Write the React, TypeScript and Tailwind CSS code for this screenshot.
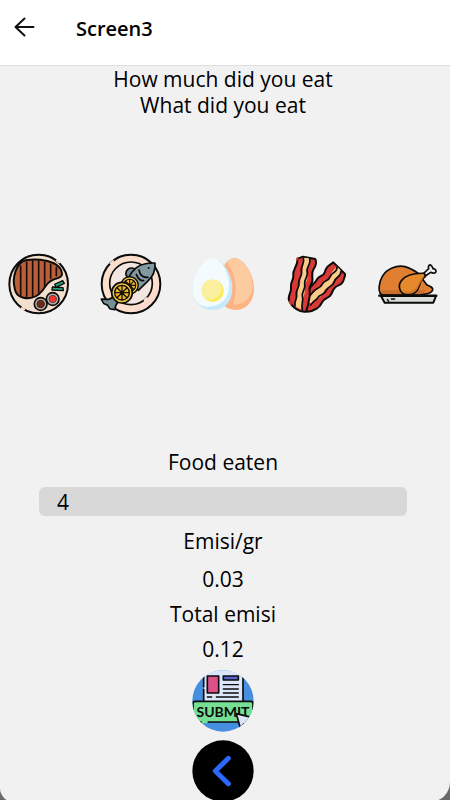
import { useState } from 'react';
import type { ReactNode } from 'react';

const EMISSION_PER_GRAM = 0.03;

// All food drawings share one 186-unit square, shown at 62px.
function Drawing({ children }: { children: ReactNode }) {
  return (
    <svg viewBox="24 22 186 186" className="block size-full" aria-hidden="true" strokeLinecap="round" strokeLinejoin="round">
      {children}
    </svg>
  );
}

function SteakIcon() {
  return (
    <Drawing>
      <circle cx="116" cy="115" r="88" fill="#f3dfcd" stroke="#0b0b0b" strokeWidth="6" />
      <path d="M171 45l6 5M66 188l6 3" stroke="#f3dfcd" strokeWidth="7" />
      <path d="M44 128C36 96 48 50 78 44c26-5 60-2 82 8 14 7 26 20 26 33 0 12-14 12-26 17-20 8-24 22-34 34-14 18-36 24-56 20-14-3-24-14-26-28z" fill="#b9603b" stroke="#0b0b0b" strokeWidth="6" />
      <path d="M62 62v88M80 50v102M98 46v106M116 46v94M134 50v70M152 56v42M169 66v24" stroke="#1a0d08" strokeWidth="5" fill="none" />
      <path d="M164 116l24-11 5 8-25 12zM157 124l32 2 1 9-34-2z" fill="#22a77c" stroke="#0b0b0b" strokeWidth="4" />
      <circle cx="158" cy="160" r="19" fill="#b9b3b0" stroke="#0b0b0b" strokeWidth="5" />
      <circle cx="158" cy="160" r="11" fill="#f5352e" stroke="#52443f" strokeWidth="3" />
      <circle cx="122" cy="175" r="19" fill="#b9b3b0" stroke="#0b0b0b" strokeWidth="5" />
      <circle cx="122" cy="175" r="11" fill="#6b2b16" stroke="#40241b" strokeWidth="3" />
    </Drawing>
  );
}

function LemonSlice({ x, y, r }: { x: number; y: number; r: number }) {
  return (
    <g transform={`translate(${x} ${y}) scale(${r / 30})`}>
      <circle r="31" fill="#f6c842" stroke="#0b0b0b" strokeWidth="5" />
      <circle r="22" fill="#efb82c" stroke="#0b0b0b" strokeWidth="4" />
      <path d="M0-21V21M-21 0H21M-15-15L15 15M-15 15L15-15" stroke="#15120a" strokeWidth="4" />
      <circle r="6" fill="#15120a" />
    </g>
  );
}

function FishIcon() {
  return (
    <Drawing>
      <circle cx="117" cy="115" r="88" fill="#fbdfcc" />
      <path d="M113 202a88 88 0 0 0 92-88L166 166z" fill="#fbd9d1" />
      <circle cx="117" cy="115" r="88" fill="none" stroke="#0b0b0b" strokeWidth="6" />
      <circle cx="117" cy="113" r="64" fill="#f3e5df" stroke="#0b0b0b" strokeWidth="5" />
      <path d="M56 53l7-6M164 158l-6 5" stroke="#fbdfcc" strokeWidth="7" />
      <path d="M102 88c-2-16 10-25 26-19l7 10-25 21z" fill="#788e96" stroke="#0b0b0b" strokeWidth="5" />
      <path d="M189 52c-30-1-54 6-68 26l-18 28 36 28 27-26c18-16 25-34 23-56z" fill="#8299a2" stroke="#0b0b0b" strokeWidth="5" />
      <path d="M141 73c3 15 12 24 27 22M133 86c5 13 11 20 22 19" fill="none" stroke="#0b0b0b" strokeWidth="5" />
      <circle cx="170" cy="67" r="3" fill="#0b0b0b" />
      <path d="M65 151c-10 13-20 10-37 9 5 9 5 16 13 16 10 0 7 11 14 14l14 2c0-14 6-20 12-27z" fill="#788e96" stroke="#0b0b0b" strokeWidth="5" />
      <LemonSlice x={113} y={119} r={25} />
      <LemonSlice x={90} y={141} r={30} />
    </Drawing>
  );
}

function EggIcon() {
  return (
    <Drawing>
      <path d="M151 37c28 0 59 50 59 91 0 38-22 65-55 65-32 0-54-26-54-63 0-43 23-93 50-93z" fill="#fdb384" />
      <path d="M156 38c27 5 50 50 50 82 0 30-20 52-49 57-15 2-6-12-3-28 5-29-2-66-22-93-7-10 7-20 24-18z" fill="#fccba0" />
      <path d="M86 37c29 0 59 50 59 91 0 39-22 65-58 65-38 0-61-27-61-65 0-42 31-91 60-91z" fill="#c6eafb" />
      <path d="M86 37c25 0 49 44 49 82 0 39-22 64-64 64-28 0-45-23-45-55 0-42 31-91 60-91z" fill="#f3fbff" />
      <circle cx="86" cy="135" r="33" fill="#fbed50" />
      <path d="M53 132c2-38 53-41 60-7 3 22-17 39-42 37-11-4-18-16-18-30z" fill="#fbefa0" />
    </Drawing>
  );
}

function BaconIcon() {
  return (
    <Drawing>
      <g transform="translate(6 0)">
        <path d="M166 50L202 86C197 103 196 115 180 120C166 125 166 133 160 145C153 160 139 155 132 170C127 184 109 197 88 198L72 178L96 126C104 115 111 114 117 101C125 88 137 93 141 78C145 63 151 61 166 50Z" fill="#d93a38" stroke="#0b0b0b" strokeWidth="6" />
        <path d="M176 62L190 76C187 93 177 91 170 101C160 115 163 120 148 127C135 132 139 142 129 152C118 160 108 160 101 172L84 171L101 145C112 140 114 131 124 125C137 118 132 106 147 101C160 94 155 85 165 76Z" fill="#f8cd8c" />
        <path d="M177 64C177 84 163 76 157 92C151 109 138 102 132 117C126 130 113 127 105 139L91 156M189 77C189 96 174 91 169 108C164 124 151 120 145 134C139 151 125 144 119 157C113 166 104 166 98 178" fill="none" stroke="#0b0b0b" strokeWidth="5" />
        <path d="M59 39L75 33L112 40C117 52 114 60 107 70C98 83 105 91 103 106C101 119 91 120 95 139C98 155 91 162 91 175L84 198C66 201 43 187 33 164C28 151 42 139 39 123C36 111 48 104 46 87C44 70 58 66 59 39Z" fill="#d93a38" stroke="#0b0b0b" strokeWidth="6" />
        <path d="M77 36L94 38C98 53 89 61 87 71C84 83 92 89 87 103C82 115 78 117 80 133C82 150 71 157 73 174L72 192L53 183C50 165 61 158 59 144C57 128 68 123 67 105C65 87 75 84 74 67C74 53 80 50 77 36Z" fill="#f8cd8c" />
        <path d="M76 36C82 54 68 60 70 75C75 91 61 98 62 112C65 127 52 132 55 148C59 160 47 166 51 180M95 39C100 56 87 60 87 74C93 90 80 98 80 112C84 130 71 137 73 151C78 166 68 174 73 193" fill="none" stroke="#0b0b0b" strokeWidth="5" />
        <path d="M35 168l4 7M57 41l2-4M117 181l3-3" stroke="#d93a38" strokeWidth="6" />
      </g>
    </Drawing>
  );
}

function ChickenIcon() {
  return (
    <Drawing>
      <path d="M39 146c-9-10-7-35 4-54 13-22 42-35 68-29 16 4 28 12 40 20l25 34c11 5 20 8 18 16-3 8-14 12-27 13z" fill="#e07f32" stroke="#0b0b0b" strokeWidth="5" />
      <path d="M41 134h132c-2 6-8 10-16 12H43z" fill="#ca6e2a" />
      <path d="M168 82l14-13c-3-9 3-14 8-9 4 2 3 6 5 9 7-1 11 8 8 11-5 5-11 2-15 0l-16 11z" fill="#eeeef3" stroke="#0b0b0b" strokeWidth="5" />
      <path d="M169 83c-27-1-55 4-69 22-12 16-5 41 17 42 24 1 33-11 38-30 3-13 9-18 17-24z" fill="#e58a2c" stroke="#0b0b0b" strokeWidth="5" />
      <path d="M105 133c17 11 42 2 50-28l14-17c-5 16-9 19-15 30-7 24-33 36-49 15z" fill="#cf7429" />
      <path d="M39 151h165l-8 20H50z" fill="#d9ded8" stroke="#0b0b0b" strokeWidth="6" />
      <path d="M34 150h171" stroke="#0b0b0b" strokeWidth="7" />
      <path d="M70 160h10M62 167l-4-6" stroke="#0b0b0b" strokeWidth="4" />
    </Drawing>
  );
}

function SubmitIcon() {
  return (
    <svg viewBox="28 22 186 186" className="block size-full" aria-hidden="true" strokeLinecap="round" strokeLinejoin="round">
      <clipPath id="submit-circle">
        <circle cx="121" cy="115" r="92" />
      </clipPath>
      <g clipPath="url(#submit-circle)">
        <path d="M28 22h186v186H28z" fill="#468fdf" />
        <path d="M63 22h118v102H63z" fill="#dce6fb" />
        <path d="M63 42v30M63 80v36M181 42v74" stroke="#0b0b0b" strokeWidth="5" />
        <path d="M60 31H190" stroke="#dce6fb" strokeWidth="9" />
        <path d="M74 40h34v51H74z" fill="#dc5187" stroke="#0b0b0b" strokeWidth="5" />
        <path d="M122 40h45v12h-45z" fill="#5863cd" stroke="#0b0b0b" strokeWidth="5" />
        <path d="M122 66h45M122 79h45M122 91h45M101 103h66M74 103h13" stroke="#0b0b0b" strokeWidth="4" />
        <rect x="31" y="116" width="180" height="62" rx="7" fill="#75df94" stroke="#0b0b0b" strokeWidth="5" />
        <path d="M60 178h12" stroke="#75df94" strokeWidth="7" />
        <text x="121" y="163" textAnchor="middle" className="font-[Lato] text-[42px] font-bold" fill="#0b0b0b">SUBMIT</text>
        <path d="M161 153l12 43 10-12 14 18 14-16-14-14 13-7z" fill="#dce4f6" stroke="#0b0b0b" strokeWidth="5" />
      </g>
    </svg>
  );
}

const FOODS = [
  { id: 'steak', label: 'Steak', icon: SteakIcon },
  { id: 'fish', label: 'Fish', icon: FishIcon },
  { id: 'egg', label: 'Egg', icon: EggIcon },
  { id: 'bacon', label: 'Bacon', icon: BaconIcon },
  { id: 'chicken', label: 'Chicken', icon: ChickenIcon },
];

function Header() {
  return (
    <header className="flex h-[66px] items-center border-b border-[#dedede] bg-white pb-2 pl-3">
      <button type="button" aria-label="Go back" className="mb-1 flex size-6 items-center justify-center">
        <svg viewBox="0 0 24 24" className="size-6" fill="none" stroke="#111" strokeWidth="2" strokeLinecap="round" strokeLinejoin="round" aria-hidden="true">
          <path d="M21.5 12H3.5M12.5 3.5L3.5 12l9 8.500" />
        </svg>
      </button>
      <h1 className="ml-10 text-[20px] leading-[26px] font-semibold">Screen3</h1>
    </header>
  );
}

export default function App() {
  const [amount, setAmount] = useState('4');
  const total = (Number(amount) || 0) * EMISSION_PER_GRAM;

  return (
    <div className="min-h-screen overflow-hidden bg-[#696969] font-['Open_Sans','Noto_Sans',sans-serif] text-black">
      <div className="-mb-0.5 flex min-h-[calc(100vh+2px)] flex-col overflow-hidden rounded-br-[20px] rounded-bl-[14px] bg-[#f1f1f1]">
        <Header />

        <main className="flex flex-1 flex-col pr-1 text-center text-[21px] leading-[26px]">
          <p>
            How much did you eat
            <br />
            What did you eat
          </p>

          <div className="flex flex-1 items-center justify-between px-2 py-8">
            {FOODS.map(({ id, label, icon: Icon }) => (
              <button key={id} type="button" aria-label={label} className="size-[62px]">
                <Icon />
              </button>
            ))}
          </div>

          <label htmlFor="amount">Food eaten</label>
          <input
            id="amount"
            value={amount}
            onChange={e => setAmount(e.target.value)}
            className="mx-[39px] my-3 h-[29px] rounded-md bg-[#d8d8d8] px-[18px] outline-none"
          />

          <p>Emisi/gr</p>
          <p className="mt-3">{EMISSION_PER_GRAM}</p>
          <p className="mt-[9px]">Total emisi</p>
          <p className="mt-[9px]">{total.toFixed(2)}</p>

          <div className="mt-2 flex flex-col items-center gap-2">
            <button type="button" aria-label="Submit" className="size-[62px]">
              <SubmitIcon />
            </button>
            <button type="button" aria-label="Previous" className="size-[62px]">
              <svg viewBox="28 22 186 186" className="block size-full" fill="none" aria-hidden="true">
                <circle cx="121" cy="115" r="92" fill="#000" />
                <path d="M137 77L98 115l39 38" stroke="#2c68fb" strokeWidth="15" strokeLinecap="round" strokeLinejoin="round" />
              </svg>
            </button>
          </div>
        </main>
      </div>
    </div>
  );
}
